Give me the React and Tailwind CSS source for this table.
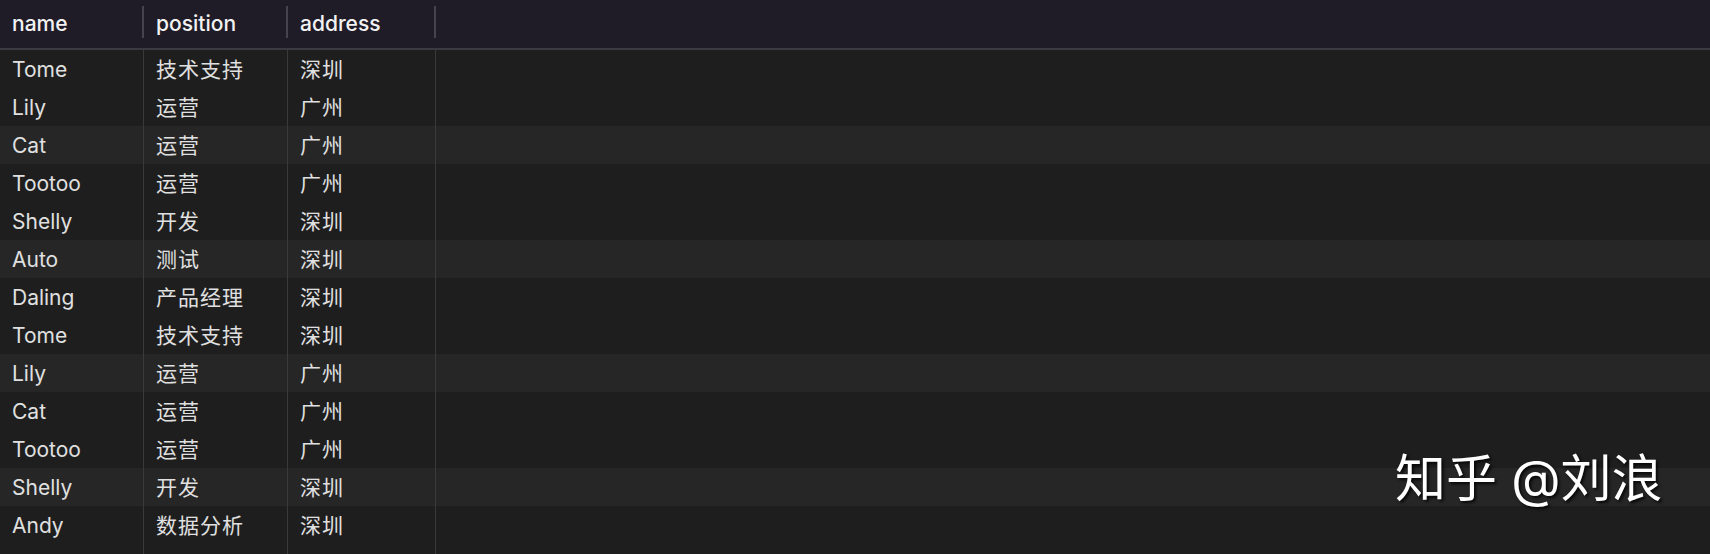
const rows = [
  ["Tome", "技术支持", "深圳"],
  ["Lily", "运营", "广州"],
  ["Cat", "运营", "广州"],
  ["Tootoo", "运营", "广州"],
  ["Shelly", "开发", "深圳"],
  ["Auto", "测试", "深圳"],
  ["Daling", "产品经理", "深圳"],
  ["Tome", "技术支持", "深圳"],
  ["Lily", "运营", "广州"],
  ["Cat", "运营", "广州"],
  ["Tootoo", "运营", "广州"],
  ["Shelly", "开发", "深圳"],
  ["Andy", "数据分析", "深圳"],
];

const font = { fontFamily: '"Inter", "Noto Sans CJK SC", sans-serif' };

function HeaderCell({ label, width }) {
  return (
    <div className={`relative flex h-full items-center pl-3 ${width}`}>
      <span className="text-[21px] font-medium text-[#f2f2f2]">{label}</span>
      <div className="absolute right-0 top-[6px] h-[32px] w-[2px] bg-[#46434e]"></div>
    </div>
  );
}

export default function App() {
  return (
    <div className="relative flex h-[554px] w-[1710px] flex-col overflow-hidden bg-[#1e1e1e]" style={font}>
      {/* Header */}
      <div className="flex h-[50px] shrink-0 border-b-2 border-[#3b3941] bg-[#1f1c27]">
        <HeaderCell label="name" width="w-[144px]" />
        <HeaderCell label="position" width="w-[144px]" />
        <HeaderCell label="address" width="w-[148px]" />
      </div>

      {/* Body */}
      <div className="flex flex-1 flex-col">
        {rows.map((r, i) => (
          <div
            key={i}
            className={`flex h-[38px] shrink-0 ${i % 3 === 2 ? "bg-[#262626]" : ""}`}
          >
            <div className="flex w-[144px] items-center border-r border-[#3a3a3a] pl-3 pt-[2px] text-[21px] text-[#e0e0e0]">
              {r[0]}
            </div>
            <div className="flex w-[144px] items-center border-r border-[#3a3a3a] pl-3 pt-[2px] text-[21px] tracking-[1px] text-[#e0e0e0]">
              {r[1]}
            </div>
            <div className="flex w-[148px] items-center border-r border-[#3a3a3a] pl-3 pt-[2px] text-[21px] tracking-[1px] text-[#e0e0e0]">
              {r[2]}
            </div>
          </div>
        ))}
        <div className="flex flex-1">
          <div className="w-[144px] border-r border-[#3a3a3a]"></div>
          <div className="w-[144px] border-r border-[#3a3a3a]"></div>
          <div className="w-[148px] border-r border-[#3a3a3a]"></div>
        </div>
      </div>

      {/* Watermark */}
      <div className="absolute left-[1395px] top-[453px] text-[51px] leading-none text-white [text-shadow:2px_2px_3px_rgba(0,0,0,0.8)]">
        知乎 @刘浪
      </div>
    </div>
  );
}
